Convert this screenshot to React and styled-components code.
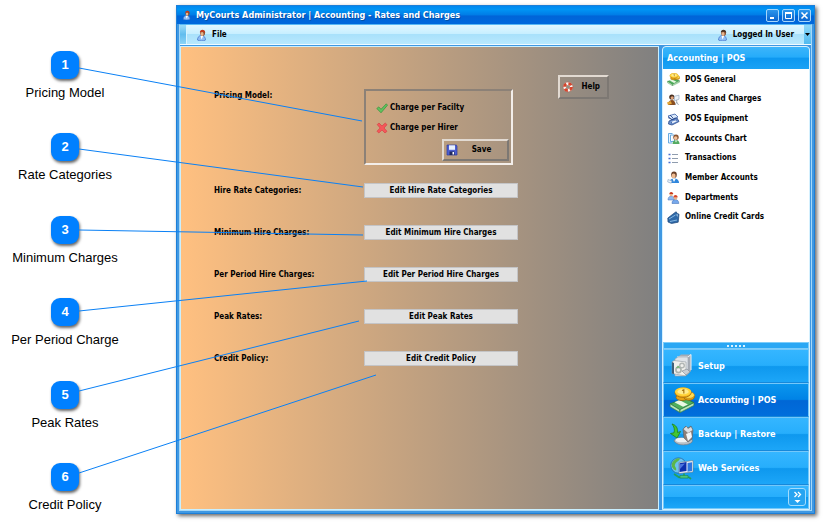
import React from 'react';
import styled, { createGlobalStyle, css } from 'styled-components';

const ui = '"DejaVu Sans Condensed", "DejaVu Sans", sans-serif';

const GlobalStyle = createGlobalStyle`
  * { box-sizing: border-box; }
  body { margin: 0; background: #fff; }
  button { font: inherit; color: inherit; cursor: pointer; }
  svg { display: block; flex: none; }
`;

const Page = styled.div`
  position: relative;
  display: flex;
  min-height: 100vh;
  padding: 5px 8px 14px 0;
`;

const Callouts = styled.ol`
  display: flex;
  flex-direction: column;
  justify-content: space-between;
  flex: none;
  width: 130px;
  margin: 0 46px 0 0;
  padding: 46px 0 1px;
  list-style: none;
`;

const Callout = styled.li`
  display: flex;
  flex-direction: column;
  align-items: center;
  gap: 6px;
  font: 13px/16px "Liberation Sans", Arial, sans-serif;
  color: #000;
  white-space: nowrap;
`;

const Badge = styled.span`
  width: 28px;
  height: 28px;
  border-radius: 9px;
  background: #0080ff;
  box-shadow: 1px 2px 3px rgba(0, 0, 0, 0.6);
  color: #fff;
  font-size: 13px;
  font-weight: 700;
  line-height: 28px;
  text-align: center;
`;

const Leaders = styled.svg`
  position: absolute;
  top: 0;
  left: 0;
  width: 520px;
  height: 520px;
  pointer-events: none;
  stroke: #0a80f5;
  stroke-width: 1;
`;

const Window = styled.section`
  display: flex;
  flex-direction: column;
  flex: 1;
  min-width: 0;
  border: 1px solid #1c7fd8;
  background: #3f98e2;
  box-shadow: 2px 2px 4px rgba(0, 0, 0, 0.6);
  font: 700 8px/12px ${ui};
  color: #000;
`;

const TitleBar = styled.header`
  display: flex;
  align-items: center;
  gap: 4px;
  height: 18px;
  padding: 0 3px 0 5px;
  background: linear-gradient(#0088f0, #0094f4 20%, #007ce6 50%, #0064d8 55%, #0068dc);
  color: #fff;
`;

const Title = styled.h1`
  flex: 1;
  margin: 0;
  font-size: 9px;
  line-height: 14px;
  white-space: nowrap;
  text-shadow: 1px 1px 0 #0050a8;
`;

const WindowButtons = styled.div`
  display: flex;
  gap: 3px;
`;

const WindowButton = styled.button`
  display: grid;
  place-items: center;
  width: 13px;
  height: 13px;
  padding: 0;
  border: 1px solid #a6d6fb;
  border-radius: 2px;
  background: linear-gradient(#2b96ec, #0a64ce);
`;

const WindowBody = styled.div`
  display: flex;
  flex-direction: column;
  flex: 1;
  margin: 0 2px 2px;
  border: 1px solid #a5d8f8;
  border-top-color: #58b8f4;
`;

const MenuBar = styled.nav`
  display: flex;
  justify-content: space-between;
  align-items: stretch;
  height: 20px;
  border-bottom: 1px solid #f0fbff;
  background: linear-gradient(#e2f7ff, #c8efff 45%, #a9e1fb 50%, #b8e8fd);
`;

const MenuGroup = styled.div`
  display: flex;
  align-items: stretch;
`;

const Grip = styled.span`
  width: 7px;
  border-right: 1px solid #d8f4ff;
  background: linear-gradient(#9cdcf8, #62bdee 50%, #8cd4f6);
`;

const MenuButton = styled.button`
  display: flex;
  align-items: center;
  gap: 4px;
  padding: 0 10px 0 9px;
  border: 0;
  background: none;
  line-height: 12px;
`;

const MenuArrow = styled.button`
  display: grid;
  place-items: center;
  width: 7px;
  padding: 0;
  border: 0;
  background: linear-gradient(#8ed8f9, #50baf0);
`;

const Panes = styled.div`
  display: flex;
  flex: 1;
  gap: 3px;
  margin-top: 1px;
`;

const Workspace = styled.main`
  display: flex;
  align-items: flex-start;
  flex: 1;
  gap: 40px;
  min-width: 0;
  padding: 28px 49px 0 33px;
  border: 1px solid #c9efff;
  background: linear-gradient(90deg, #ffc080, #808080);
`;

const Form = styled.div`
  display: grid;
  flex: 1;
  grid-template-columns: 150px minmax(0, 154px);
  row-gap: 27px;
  padding-top: 13px;
`;

const FieldLabel = styled.span`
  line-height: 15px;
  white-space: nowrap;
`;

const PricingBox = styled.fieldset`
  display: flex;
  flex-direction: column;
  align-items: flex-start;
  min-width: 0;
  height: 76px;
  margin: 1px 5px -9px 0;
  padding: 7px 2px 2px 10px;
  border: 2px solid;
  border-color: #8c8177 #f3eeea #f3eeea #8c8177;
`;

const PricingOption = styled.button`
  display: flex;
  align-items: center;
  gap: 2px;
  height: 20px;
  padding: 0;
  border: 0;
  background: none;
`;

const ToolButton = styled.button`
  display: flex;
  align-items: center;
  flex: none;
  height: ${(p) => (p.$tall ? '24px' : '22px')};
  width: ${(p) => (p.$tall ? '51px' : '67px')};
  padding: ${(p) => (p.$tall ? '0 7px 0 2px' : '0 2px 0 2px')};
  border: 2px solid;
  border-color: #e2dad2 #7d7873 #7d7873 #e2dad2;
  background: none;

  span { flex: 1; text-align: ${(p) => (p.$tall ? 'right' : 'center')}; }
`;

const SaveSlot = styled.div`
  align-self: flex-end;
  margin-top: 1px;
`;

const EditButton = styled.button`
  height: 15px;
  padding: 0;
  border: 1px solid #c4c4c6;
  background: #e1e1e1;
  line-height: 12px;
`;

const Sidebar = styled.aside`
  display: flex;
  flex-direction: column;
  width: 148px;
  margin-right: 1px;
  border: 1px solid #d5f1ff;
  border-radius: 4px 4px 0 0;
  background: #fff;
  color: #fff;
  font-size: 9px;
`;

const SidebarTitle = styled.h2`
  margin: 0;
  height: 22px;
  padding: 0 4px;
  border-radius: 3px 3px 0 0;
  background: linear-gradient(#3cb5fa, #26acfa 45%, #0d98f0 52%, #1ba2f5);
  font-size: 9px;
  line-height: 22px;
`;

const LinkList = styled.ul`
  display: grid;
  grid-auto-rows: 1fr;
  height: 157px;
  margin: 1px 0 auto;
  padding: 0 0 0 4px;
  list-style: none;
  color: #000;
  font-size: 8px;
`;

const LinkItem = styled.a`
  display: flex;
  align-items: center;
  gap: 5px;
  height: 100%;
  color: inherit;
  text-decoration: none;
`;

const Splitter = styled.div`
  display: flex;
  justify-content: center;
  align-items: center;
  gap: 2px;
  height: 7px;
  border: 1px solid #7cccfa;
  background: #2aa7f4;
`;

const Dot = styled.i`
  width: 2px;
  height: 2px;
  background: #d8f2ff;
`;

const blueFace = css`background: linear-gradient(#35b6ff, #27aefc 48%, #0e98ee 52%, #1ca6f8);`;
const activeFace = css`background: linear-gradient(#0a96ee, #0083e6 48%, #0067d6 52%, #006edc);`;

const NavButton = styled.button`
  display: flex;
  align-items: center;
  gap: 3px;
  height: 34px;
  padding: 0 5px;
  border: 1px solid #74c8fa;
  border-bottom-color: #1688da;
  ${(p) => (p.$active ? activeFace : blueFace)}
  text-align: left;
  line-height: 12px;
`;

const SidebarFooter = styled.footer`
  display: flex;
  justify-content: flex-end;
  align-items: center;
  height: 24px;
  padding-right: 2px;
  border: 1px solid #74c8fa;
  ${blueFace}
`;

const MoreButton = styled.button`
  display: grid;
  place-items: center;
  width: 18px;
  height: 18px;
  padding: 0;
  border: 1px solid #a2dcfd;
  border-radius: 3px;
  background: #27a4f1;
`;

const Person = ({ hat = '#c63a1e', size = 12 }) => (
  <svg width={size} height={size} viewBox="0 0 12 12" aria-hidden="true">
    <path d="M1.500 11c0-2.700 1.500-4.500 4-4.500s4 1.800 4 4.500c-2 1.300-6 1.300-8 0z" fill="#8fbdf5" stroke="#3f73c8" strokeWidth=".7" />
    <path d="M4.500 7l1 3.400L7.200 7z" fill="#fff" />
    <ellipse cx="6.600" cy="4" rx="2.400" ry="3" fill="#8a4a2a" />
    <ellipse cx="6.100" cy="4.900" rx="1.500" ry="2" fill="#e7b48c" />
    <path d="M3.800 3.300C4 0 8.900-.2 9.300 3.700 7.600 2.500 5.500 2.300 3.800 3.300z" fill={hat} />
  </svg>
);

const Coins = ({ size = 13 }) => (
  <svg width={size} height={size} viewBox="0 0 24 24" aria-hidden="true">
    <path d="M1 15.500l14-5 8 4-13 6.500z" fill="#4faf5c" stroke="#2b7d3c" strokeWidth=".8" />
    <path d="M1 15.500l9 5.500v2.500l-9-5.300zM10 21l13-6.500v2.500l-13 6.700z" fill="#b9e4b8" stroke="#2b7d3c" strokeWidth=".6" />
    <path d="M5 14l8 4.300 4.500-2.200-8-4z" fill="#e9f8e4" />
    <ellipse cx="12" cy="9.500" rx="5.500" ry="3" fill="#e8a416" stroke="#9c6708" strokeWidth=".7" />
    <ellipse cx="18.500" cy="9" rx="5" ry="3.200" fill="#eba616" stroke="#9c6708" strokeWidth=".7" />
    <ellipse cx="18.500" cy="7.500" rx="5" ry="3" fill="#ffdd52" stroke="#a8720c" strokeWidth=".5" />
    <ellipse cx="13" cy="5.200" rx="7.500" ry="4.400" fill="#f0ac1c" stroke="#a8720c" strokeWidth=".8" />
    <ellipse cx="13" cy="4.300" rx="7.500" ry="3.900" fill="#ffd43a" />
    <ellipse cx="13" cy="4.300" rx="5.200" ry="2.500" fill="#ffec8e" />
    <path d="M12 3.200l1.700-.7v3.600" fill="none" stroke="#9c6b0a" />
  </svg>
);

const RatesIcon = () => (
  <svg width="13" height="13" viewBox="0 0 13 13" aria-hidden="true">
    <path d="M1 12c.2-3.500 1.800-5 4-5s3.300 2 3.500 5z" fill="#8a4f22" />
    <circle cx="4.800" cy="4" r="2.600" fill="#4a3020" />
    <circle cx="5.200" cy="4.800" r="1.600" fill="#dfa27a" />
    <path d="M0 9.500l3.500-1.500 1.500 2.500-4 1.500z" fill="#e3a536" />
    <path d="M7.500 3.200l4.500-1v4l-4.500 1.500z" fill="#eef3f8" stroke="#8aa0b8" strokeWidth=".6" />
    <path d="M9.700 7v2L8 12M9.700 9l1.800 3" fill="none" stroke="#8c98a6" strokeWidth=".8" />
  </svg>
);

const EquipmentIcon = () => (
  <svg width="13" height="13" viewBox="0 0 13 13" aria-hidden="true">
    <path d="M1 3l7-2 3 3-6 3z" fill="#dce9fa" stroke="#3860a8" strokeWidth=".8" />
    <path d="M2 8l8-3 2 3.500-7 3.500-3.500-1z" fill="#6d93d0" stroke="#27488c" strokeWidth=".8" />
    <path d="M1 4.500l4 2 3.500-1.600M4 10l6-3M3 2l3 3" fill="none" stroke="#27488c" strokeWidth=".9" />
    <path d="M4.500 8.800l4.500-1.600.8 1-4.300 2z" fill="#f3f8ff" />
  </svg>
);

const ChartIcon = () => (
  <svg width="13" height="13" viewBox="0 0 13 13" aria-hidden="true">
    <path d="M5.500 1.500H1.500V11h3.500M3.500 3h4v6.500h-4z" fill="#eaf5ff" stroke="#5aa2dc" strokeWidth=".9" />
    <path d="M5.500 12c0-2.600 1.500-4 3.500-4s3.500 1.500 3.500 4z" fill="#54ab62" />
    <circle cx="9" cy="5.200" r="2.700" fill="#8b5430" />
    <circle cx="8.700" cy="6.100" r="1.800" fill="#f0bf98" />
    <path d="M8 8.500l1 2 1-2z" fill="#fff" />
  </svg>
);

const ListIcon = () => (
  <svg width="13" height="13" viewBox="0 0 13 13" aria-hidden="true">
    <path d="M1.500 2.500h2M1.500 6.500h2M1.500 10.500h2" stroke="#4a6fcf" strokeWidth="1.600" />
    <path d="M5 2.500h6M5 6.500h6M5 10.500h6" stroke="#8f9cae" />
  </svg>
);

const MemberIcon = () => (
  <svg width="13" height="13" viewBox="0 0 13 13" aria-hidden="true">
    <path d="M2.500 12c0-3 1.800-4.400 4.500-4.400s5 1.400 5 4.400z" fill="#2f86dc" />
    <ellipse cx="7" cy="3.800" rx="2.800" ry="3.200" fill="#6a4028" />
    <ellipse cx="6.600" cy="4.900" rx="2" ry="2.400" fill="#f0bc92" />
    <path d="M5.500 7.700L7 11l1.700-3.300z" fill="#fff" />
    <path d="M1 8.500l4 1.500-.8 2.200-3.500-1.200z" fill="#e9f2fb" stroke="#89a6c6" strokeWidth=".6" />
  </svg>
);

const DepartmentIcon = () => (
  <svg width="13" height="13" viewBox="0 0 13 13" aria-hidden="true">
    <path d="M1 9c0-2.400 1-3.700 3-3.700S7.500 6.500 7.500 9z" fill="#8fb8ee" stroke="#4674bd" strokeWidth=".5" />
    <circle cx="4.200" cy="3.600" r="1.700" fill="#e9b288" />
    <path d="M2.300 3C2.500.3 5.800.3 6.300 3z" fill="#c8381c" />
    <path d="M5 12.500c0-2.600 1.300-3.900 3.300-3.900s3.500 1.300 3.500 3.900z" fill="#77a9ec" stroke="#3766b0" strokeWidth=".5" />
    <circle cx="8.500" cy="6.800" r="1.900" fill="#e9b288" />
    <path d="M6.400 6.200c.2-2.800 3.900-2.800 4.300 0z" fill="#d6452a" />
  </svg>
);

const CardIcon = () => (
  <svg width="13" height="13" viewBox="0 0 13 13" aria-hidden="true">
    <path d="M.8 7L8 1.500 9.200.8l1 1.700 1.800.7-.8 8-6.700 1.300L1 11z" fill="#2f69a8" stroke="#1d4678" strokeWidth=".7" />
    <path d="M2 8l6.500-4M3 10.500l7-1.500" stroke="#8fc0e8" strokeWidth=".9" />
    <path d="M9.300 3.500l1.400-.2-.3 2.600z" fill="#c9e4f8" />
  </svg>
);

const Tick = () => (
  <svg width="12" height="12" viewBox="0 0 12 12" aria-hidden="true">
    <path d="M.8 6.500l2-1.600L5 7.300 10.300 1.800l1.200 1.400L5 10.800z" fill="#62c35f" stroke="#32903a" strokeWidth=".7" />
  </svg>
);

const Cross = () => (
  <svg width="12" height="12" viewBox="0 0 12 12" aria-hidden="true">
    <path d="M1.200 2.600L3 1l3 3 3.200-3L11 2.700 8 6l3 3.300L9 11 6 8l-3.200 3L1 9.200 4.100 6z" fill="#f4585a" stroke="#d5383c" strokeWidth=".6" />
  </svg>
);

const Disk = () => (
  <svg width="12" height="12" viewBox="0 0 12 12" aria-hidden="true">
    <path d="M1 1h9.200l.8.800V11H1z" fill="#4c5ed0" stroke="#2b3aa0" strokeWidth=".7" />
    <path d="M3 1.300h6v4.500H3z" fill="#e8f1ff" />
    <path d="M3.500 7.500h5V11h-5z" fill="#202860" />
    <path d="M6.500 8H8v2.500H6.500z" fill="#fff" />
  </svg>
);

const Lifebuoy = () => (
  <svg width="12" height="12" viewBox="0 0 12 12" aria-hidden="true">
    <circle cx="6" cy="6" r="3.500" fill="none" stroke="#f7f2ee" strokeWidth="2.800" />
    <circle cx="6" cy="6" r="3.500" fill="none" stroke="#d8452c" strokeWidth="2.800" strokeDasharray="3.300 2.200" />
    <circle cx="6" cy="6" r="4.900" fill="none" stroke="#a8402e" strokeWidth=".4" />
  </svg>
);

const SetupIcon = () => (
  <svg width="26" height="26" viewBox="0 0 26 26" aria-hidden="true">
    <path d="M9 4l3-2.500h10V18l-3 3z" fill="#a5abb4" />
    <path d="M8 4h11l3-2.500V17" fill="none" stroke="#eef2f6" />
    <path d="M6 6l3-2h10v17l-4 2H6z" fill="#dfe3e8" stroke="#9ca4ae" strokeWidth=".6" />
    <path d="M3 9l2-1.500L17 9v14L3 20.500z" fill="#f1f1ee" stroke="#8f979f" strokeWidth=".6" />
    <path d="M3 9l2 1v11l-2-.5z" fill="#3e5f78" />
    <circle cx="13" cy="12.500" r="2.300" fill="none" stroke="#b2b7b6" strokeWidth="1.400" />
    <circle cx="9.500" cy="17" r="2.600" fill="none" stroke="#aab2ae" strokeWidth="1.600" />
    <path d="M7 15l2-2.500 2 2" fill="#6fb46f" />
    <path d="M13 18l4 4 4-3-3-3z" fill="#c9ced4" stroke="#7f8892" strokeWidth=".6" />
  </svg>
);

const BackupIcon = () => (
  <svg width="26" height="26" viewBox="0 0 26 26" aria-hidden="true">
    <path d="M5 20c1-3 5-4 8-3l7 1c3-1 4 1 3 3-2 3-14 5-18-1z" fill="#b9c0c7" stroke="#727c86" strokeWidth=".7" />
    <ellipse cx="13" cy="19" rx="6.500" ry="2.300" fill="#eef2f4" />
    <path d="M14 8l3-3 2 2 3-2 2 4-1 9-4 3-4-4z" fill="#8d7f78" stroke="#5d6268" strokeWidth=".6" />
    <path d="M14.500 8l3-2.500L19 8l3-2 1.500 3-4.500 3z" fill="#dde0e3" />
    <path d="M17 13l5-2 1 5-4 4z" fill="#f4f6f8" />
    <path d="M3 3c4 1 6 4 5.500 8.500l3-1L8 17 1.500 12.500l3.500-.7C6 8.500 5 5.500 3 3z" fill="#43c532" stroke="#1d831b" strokeWidth=".8" />
  </svg>
);

const WebIcon = () => (
  <svg width="26" height="26" viewBox="0 0 26 26" aria-hidden="true">
    <circle cx="9.500" cy="10.500" r="7.700" fill="#6cc2f0" stroke="#1f68a8" strokeWidth=".8" />
    <path d="M3 8c2-4 6-5.500 8-4.500-1 3-4 3-5 6-1 2 2 3 1 6-3-1-5-4-4-7.500z" fill="#5cb64b" />
    <path d="M10 7.500l14-2V17l-14 1.500z" fill="#eef2f6" stroke="#6d7a8a" strokeWidth=".6" />
    <path d="M10.500 8.300l7-1.200V16l-7 1z" fill="#0d2fae" />
    <path d="M18.500 8l4.500-.7V16l-4.500.7z" fill="#2f77e0" />
    <path d="M11 9.200l5-.8-5 5.500z" fill="#4c74de" />
    <path d="M15 18.500v3M5 19l5 3.300h10l2 1.700" fill="none" stroke="#23a25c" strokeWidth="1.700" />
    <path d="M11 20.500h8v2.500h-8z" fill="#48c57c" stroke="#1a7c42" strokeWidth=".5" />
  </svg>
);

const callouts = ['Pricing Model', 'Rate Categories', 'Minimum Charges', 'Per Period Charge', 'Peak Rates', 'Credit Policy'];

const leaders = [
  [79, 68, 362, 121],
  [79, 149, 363, 187],
  [79, 230, 363, 235],
  [79, 311, 367, 281],
  [79, 391, 359, 321],
  [79, 473, 376, 375],
];

const settings = [
  ['Hire Rate Categories:', 'Edit Hire Rate Categories'],
  ['Minimum Hire Charges:', 'Edit Minimum Hire Charges'],
  ['Per Period Hire Charges:', 'Edit Per Period Hire Charges'],
  ['Peak Rates:', 'Edit Peak Rates'],
  ['Credit Policy:', 'Edit Credit Policy'],
];

const links = [
  ['POS General', Coins],
  ['Rates and Charges', RatesIcon],
  ['POS Equipment', EquipmentIcon],
  ['Accounts Chart', ChartIcon],
  ['Transactions', ListIcon],
  ['Member Accounts', MemberIcon],
  ['Departments', DepartmentIcon],
  ['Online Credit Cards', CardIcon],
];

const sections = [
  ['Setup', <SetupIcon />],
  ['Accounting | POS', <Coins size={26} />],
  ['Backup | Restore', <BackupIcon />],
  ['Web Services', <WebIcon />],
];

export default function App() {
  return (
    <>
      <GlobalStyle />
      <Page>
        <Callouts>
          {callouts.map((name, i) => (
            <Callout key={name}>
              <Badge>{i + 1}</Badge>
              {name}
            </Callout>
          ))}
        </Callouts>

        <Window>
          <TitleBar>
            <Person size={10} />
            <Title>MyCourts Administrator | Accounting - Rates and Charges</Title>
            <WindowButtons>
              <WindowButton aria-label="Minimize">
                <svg width="9" height="9"><path d="M2 7h4" stroke="#fff" strokeWidth="2" /></svg>
              </WindowButton>
              <WindowButton aria-label="Maximize">
                <svg width="9" height="9"><path d="M1.500 2v5.500h6V2" fill="none" stroke="#fff" /><path d="M1 2h7" stroke="#fff" strokeWidth="2" /></svg>
              </WindowButton>
              <WindowButton aria-label="Close">
                <svg width="9" height="9"><path d="M1.500 1.500l6 6M7.500 1.500l-6 6" stroke="#fff" strokeWidth="1.500" /></svg>
              </WindowButton>
            </WindowButtons>
          </TitleBar>

          <WindowBody>
            <MenuBar>
              <MenuGroup>
                <Grip />
                <MenuButton><Person size={12} />File</MenuButton>
              </MenuGroup>
              <MenuGroup>
                <MenuButton><Person size={12} hat="#4b3528" />Logged In User</MenuButton>
                <MenuArrow aria-label="User menu">
                  <svg width="5" height="3"><path d="M0 0h5L2.500 3z" fill="#000" /></svg>
                </MenuArrow>
              </MenuGroup>
            </MenuBar>

            <Panes>
              <Workspace>
                <Form>
                  <FieldLabel id="pricing">Pricing Model:</FieldLabel>
                  <PricingBox aria-labelledby="pricing">
                    <PricingOption><Tick />Charge per Facilty</PricingOption>
                    <PricingOption><Cross />Charge per Hirer</PricingOption>
                    <SaveSlot>
                      <ToolButton><Disk /><span>Save</span></ToolButton>
                    </SaveSlot>
                  </PricingBox>
                  {settings.map(([label, action]) => (
                    <React.Fragment key={label}>
                      <FieldLabel>{label}</FieldLabel>
                      <EditButton>{action}</EditButton>
                    </React.Fragment>
                  ))}
                </Form>
                <ToolButton $tall><Lifebuoy /><span>Help</span></ToolButton>
              </Workspace>

              <Sidebar>
                <SidebarTitle>Accounting | POS</SidebarTitle>
                <LinkList>
                  {links.map(([name, Icon]) => (
                    <li key={name}>
                      <LinkItem href="#"><Icon />{name}</LinkItem>
                    </li>
                  ))}
                </LinkList>
                <Splitter><Dot /><Dot /><Dot /><Dot /><Dot /></Splitter>
                {sections.map(([name, icon]) => (
                  <NavButton key={name} $active={name === 'Accounting | POS'}>{icon}{name}</NavButton>
                ))}
                <SidebarFooter>
                  <MoreButton aria-label="More sections">
                    <svg width="9" height="13" viewBox="0 0 9 13">
                      <path d="M1.500 1l2.500 2.500L1.500 6M5 1l2.500 2.500L5 6" fill="none" stroke="#fff" strokeWidth="1.300" />
                      <path d="M1.500 9h6L4.500 12z" fill="#fff" />
                    </svg>
                  </MoreButton>
                </SidebarFooter>
              </Sidebar>
            </Panes>
          </WindowBody>
        </Window>

        <Leaders aria-hidden="true">
          {leaders.map(([x1, y1, x2, y2]) => (
            <line key={y1} x1={x1} y1={y1} x2={x2} y2={y2} />
          ))}
        </Leaders>
      </Page>
    </>
  );
}
